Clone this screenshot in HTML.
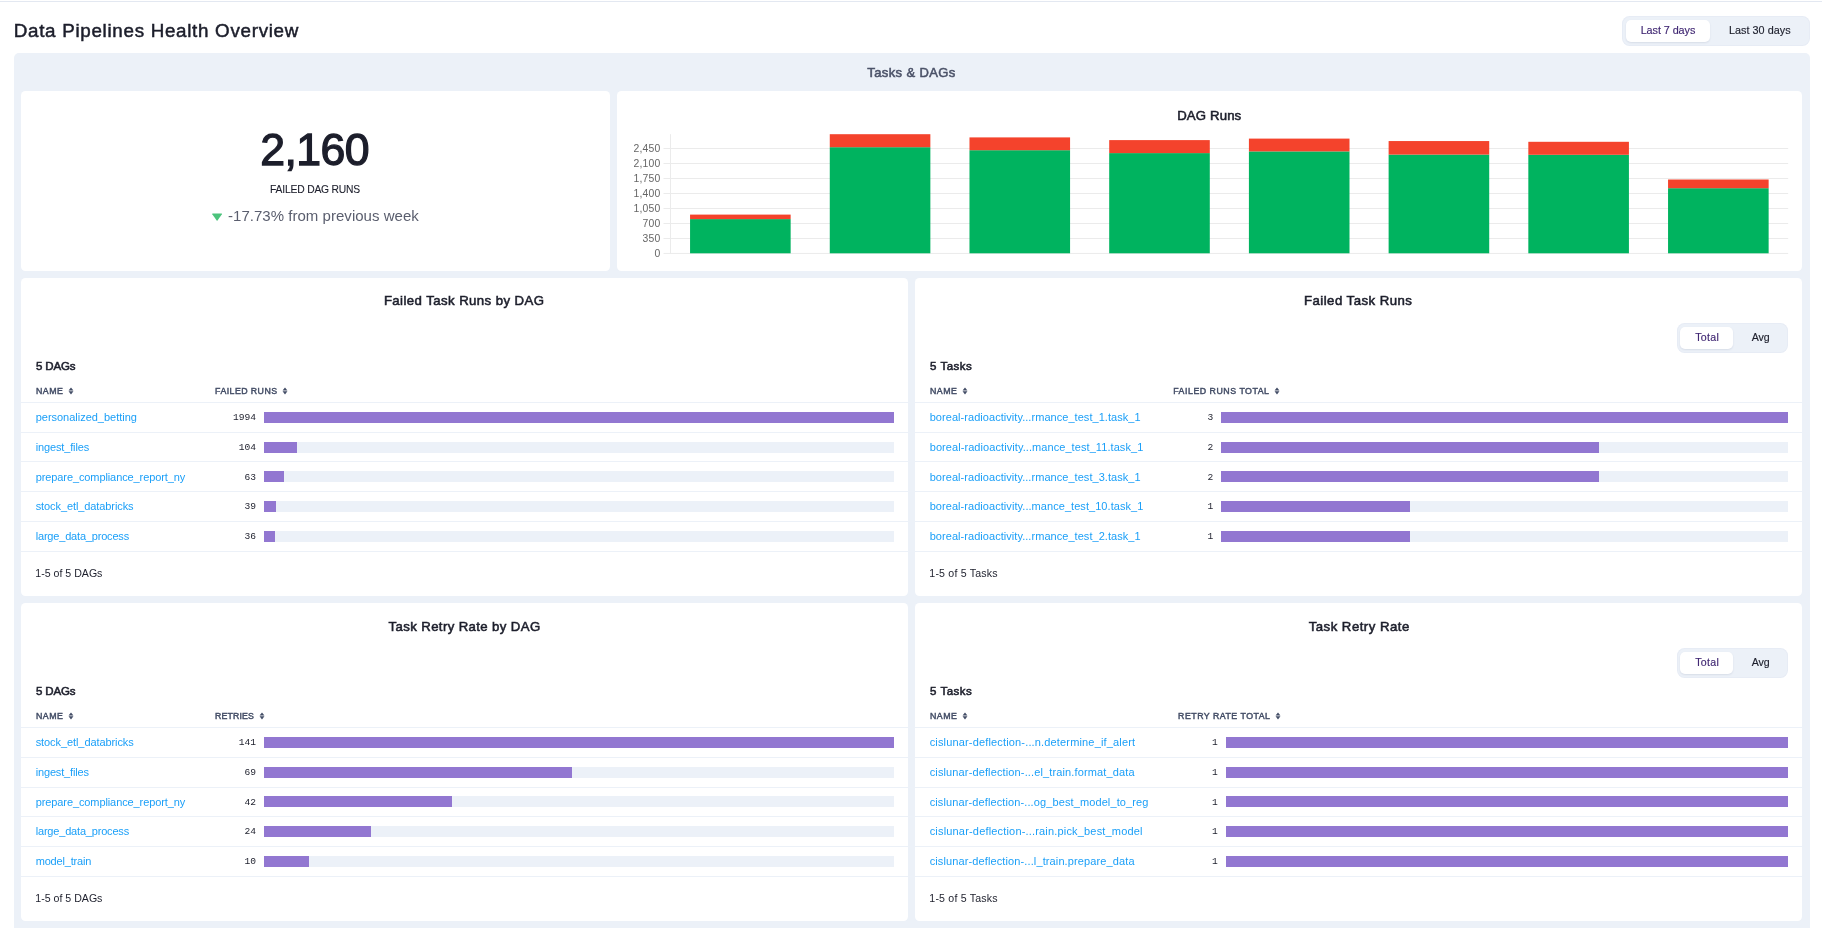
<!DOCTYPE html>
<html><head><meta charset="utf-8"><title>Data Pipelines Health Overview</title>
<style>
html,body{margin:0;padding:0;background:#fff;}
html{width:1822px;height:928px;overflow:hidden;}
body{width:1822px;height:928px;overflow:hidden;position:relative;will-change:transform;font-family:'Liberation Sans', sans-serif;}
.r{position:absolute;display:block;}
.t{position:absolute;white-space:nowrap;}
</style></head><body>
<div class="r" style="left:0px;top:1px;width:1822px;height:1px;background:#e3e8f1;"></div>
<div class="r" style="left:1622px;top:16px;width:188px;height:30px;background:#ecf1f8;border-radius:7.5px;box-shadow:inset 0 0 0 1px rgba(30,50,110,.025);"></div>
<div class="r" style="left:1626px;top:20px;width:84px;height:22px;background:#fff;border-radius:5px;box-shadow:0 1px 2px rgba(40,50,90,.10);"></div>
<div class="r" style="left:14px;top:53px;width:1796px;height:875px;background:#ecf1f8;border-radius:5px 5px 0 0;"></div>
<div class="r" style="left:21px;top:91px;width:589px;height:180px;background:#fff;border-radius:4.5px;"></div>
<div class="r" style="left:617px;top:91px;width:1185px;height:180px;background:#fff;border-radius:4.5px;"></div>
<div class="r" style="left:21px;top:278px;width:887px;height:318px;background:#fff;border-radius:4.5px;"></div>
<div class="r" style="left:915px;top:278px;width:887px;height:318px;background:#fff;border-radius:4.5px;"></div>
<div class="r" style="left:21px;top:603px;width:887px;height:318px;background:#fff;border-radius:4.5px;"></div>
<div class="r" style="left:915px;top:603px;width:887px;height:318px;background:#fff;border-radius:4.5px;"></div>
<svg class="r" style="left:211px;top:212px" width="12" height="10" viewBox="0 0 12 10"><path d="M1.6 1.6 L10.6 1.6 Q11.3 1.6 10.9 2.2 L6.5 8.6 Q6.1 9.1 5.7 8.6 L1.3 2.2 Q0.9 1.6 1.6 1.6 Z" fill="#4cc37c"/></svg>
<svg class="r" style="left:0;top:0" width="1822" height="300" viewBox="0 0 1822 300"><line x1="663.5" x2="1788.2" y1="253.45" y2="253.45" stroke="#ebebeb" stroke-width="1"/><line x1="663.5" x2="1788.2" y1="238.46" y2="238.46" stroke="#ebebeb" stroke-width="1"/><line x1="663.5" x2="1788.2" y1="223.47" y2="223.47" stroke="#ebebeb" stroke-width="1"/><line x1="663.5" x2="1788.2" y1="208.48" y2="208.48" stroke="#ebebeb" stroke-width="1"/><line x1="663.5" x2="1788.2" y1="193.49" y2="193.49" stroke="#ebebeb" stroke-width="1"/><line x1="663.5" x2="1788.2" y1="178.50" y2="178.50" stroke="#ebebeb" stroke-width="1"/><line x1="663.5" x2="1788.2" y1="163.51" y2="163.51" stroke="#ebebeb" stroke-width="1"/><line x1="663.5" x2="1788.2" y1="148.52" y2="148.52" stroke="#ebebeb" stroke-width="1"/><line x1="670.5" x2="670.5" y1="134.2" y2="253.5" stroke="#ebebeb" stroke-width="1"/><rect x="690.06" y="219.10" width="100.59" height="34.20" fill="#00b35f"/><rect x="690.06" y="214.60" width="100.59" height="4.50" fill="#f4432c"/><rect x="829.77" y="147.20" width="100.59" height="106.10" fill="#00b35f"/><rect x="829.77" y="134.20" width="100.59" height="13.00" fill="#f4432c"/><rect x="969.48" y="150.20" width="100.59" height="103.10" fill="#00b35f"/><rect x="969.48" y="137.40" width="100.59" height="12.80" fill="#f4432c"/><rect x="1109.20" y="153.10" width="100.59" height="100.20" fill="#00b35f"/><rect x="1109.20" y="140.10" width="100.59" height="13.00" fill="#f4432c"/><rect x="1248.91" y="151.40" width="100.59" height="101.90" fill="#00b35f"/><rect x="1248.91" y="138.60" width="100.59" height="12.80" fill="#f4432c"/><rect x="1388.62" y="154.60" width="100.59" height="98.70" fill="#00b35f"/><rect x="1388.62" y="141.05" width="100.59" height="13.55" fill="#f4432c"/><rect x="1528.33" y="154.80" width="100.59" height="98.50" fill="#00b35f"/><rect x="1528.33" y="141.80" width="100.59" height="13.00" fill="#f4432c"/><rect x="1668.05" y="188.20" width="100.59" height="65.10" fill="#00b35f"/><rect x="1668.05" y="179.50" width="100.59" height="8.70" fill="#f4432c"/></svg>
<div class="r" style="left:21px;top:402px;width:887px;height:1px;background:#ecf1f8;"></div>
<div class="r" style="left:21px;top:432px;width:887px;height:1px;background:#ecf1f8;"></div>
<div class="r" style="left:21px;top:461px;width:887px;height:1px;background:#ecf1f8;"></div>
<div class="r" style="left:21px;top:491px;width:887px;height:1px;background:#ecf1f8;"></div>
<div class="r" style="left:21px;top:521px;width:887px;height:1px;background:#ecf1f8;"></div>
<div class="r" style="left:21px;top:551px;width:887px;height:1px;background:#ecf1f8;"></div>
<div class="r" style="left:264px;top:412px;width:630px;height:11px;background:#ecf1f8;"></div>
<div class="r" style="left:264px;top:412px;width:630.00px;height:11px;background:#9277d1;"></div>
<div class="r" style="left:264px;top:442px;width:630px;height:11px;background:#ecf1f8;"></div>
<div class="r" style="left:264px;top:442px;width:32.86px;height:11px;background:#9277d1;"></div>
<div class="r" style="left:264px;top:471px;width:630px;height:11px;background:#ecf1f8;"></div>
<div class="r" style="left:264px;top:471px;width:19.90px;height:11px;background:#9277d1;"></div>
<div class="r" style="left:264px;top:501px;width:630px;height:11px;background:#ecf1f8;"></div>
<div class="r" style="left:264px;top:501px;width:12.32px;height:11px;background:#9277d1;"></div>
<div class="r" style="left:264px;top:531px;width:630px;height:11px;background:#ecf1f8;"></div>
<div class="r" style="left:264px;top:531px;width:11.37px;height:11px;background:#9277d1;"></div>
<svg class="r" style="left:67.60px;top:387.00px" width="6" height="8" viewBox="0 0 6 8"><path d="M3 0.4 L5.45 3.5 L0.55 3.5 Z M3 7.4 L5.45 4.3 L0.55 4.3 Z" fill="#434d66"/></svg>
<svg class="r" style="left:281.70px;top:387.00px" width="6" height="8" viewBox="0 0 6 8"><path d="M3 0.4 L5.45 3.5 L0.55 3.5 Z M3 7.4 L5.45 4.3 L0.55 4.3 Z" fill="#434d66"/></svg>
<div class="r" style="left:915px;top:402px;width:887px;height:1px;background:#ecf1f8;"></div>
<div class="r" style="left:915px;top:432px;width:887px;height:1px;background:#ecf1f8;"></div>
<div class="r" style="left:915px;top:461px;width:887px;height:1px;background:#ecf1f8;"></div>
<div class="r" style="left:915px;top:491px;width:887px;height:1px;background:#ecf1f8;"></div>
<div class="r" style="left:915px;top:521px;width:887px;height:1px;background:#ecf1f8;"></div>
<div class="r" style="left:915px;top:551px;width:887px;height:1px;background:#ecf1f8;"></div>
<div class="r" style="left:1221px;top:412px;width:567px;height:11px;background:#ecf1f8;"></div>
<div class="r" style="left:1221px;top:412px;width:567.00px;height:11px;background:#9277d1;"></div>
<div class="r" style="left:1221px;top:442px;width:567px;height:11px;background:#ecf1f8;"></div>
<div class="r" style="left:1221px;top:442px;width:378.00px;height:11px;background:#9277d1;"></div>
<div class="r" style="left:1221px;top:471px;width:567px;height:11px;background:#ecf1f8;"></div>
<div class="r" style="left:1221px;top:471px;width:378.00px;height:11px;background:#9277d1;"></div>
<div class="r" style="left:1221px;top:501px;width:567px;height:11px;background:#ecf1f8;"></div>
<div class="r" style="left:1221px;top:501px;width:189.00px;height:11px;background:#9277d1;"></div>
<div class="r" style="left:1221px;top:531px;width:567px;height:11px;background:#ecf1f8;"></div>
<div class="r" style="left:1221px;top:531px;width:189.00px;height:11px;background:#9277d1;"></div>
<svg class="r" style="left:961.60px;top:387.00px" width="6" height="8" viewBox="0 0 6 8"><path d="M3 0.4 L5.45 3.5 L0.55 3.5 Z M3 7.4 L5.45 4.3 L0.55 4.3 Z" fill="#434d66"/></svg>
<svg class="r" style="left:1273.80px;top:387.00px" width="6" height="8" viewBox="0 0 6 8"><path d="M3 0.4 L5.45 3.5 L0.55 3.5 Z M3 7.4 L5.45 4.3 L0.55 4.3 Z" fill="#434d66"/></svg>
<div class="r" style="left:21px;top:727px;width:887px;height:1px;background:#ecf1f8;"></div>
<div class="r" style="left:21px;top:757px;width:887px;height:1px;background:#ecf1f8;"></div>
<div class="r" style="left:21px;top:787px;width:887px;height:1px;background:#ecf1f8;"></div>
<div class="r" style="left:21px;top:816px;width:887px;height:1px;background:#ecf1f8;"></div>
<div class="r" style="left:21px;top:846px;width:887px;height:1px;background:#ecf1f8;"></div>
<div class="r" style="left:21px;top:876px;width:887px;height:1px;background:#ecf1f8;"></div>
<div class="r" style="left:264px;top:737px;width:630px;height:11px;background:#ecf1f8;"></div>
<div class="r" style="left:264px;top:737px;width:630.00px;height:11px;background:#9277d1;"></div>
<div class="r" style="left:264px;top:767px;width:630px;height:11px;background:#ecf1f8;"></div>
<div class="r" style="left:264px;top:767px;width:308.30px;height:11px;background:#9277d1;"></div>
<div class="r" style="left:264px;top:796px;width:630px;height:11px;background:#ecf1f8;"></div>
<div class="r" style="left:264px;top:796px;width:187.66px;height:11px;background:#9277d1;"></div>
<div class="r" style="left:264px;top:826px;width:630px;height:11px;background:#ecf1f8;"></div>
<div class="r" style="left:264px;top:826px;width:107.23px;height:11px;background:#9277d1;"></div>
<div class="r" style="left:264px;top:856px;width:630px;height:11px;background:#ecf1f8;"></div>
<div class="r" style="left:264px;top:856px;width:44.68px;height:11px;background:#9277d1;"></div>
<svg class="r" style="left:67.60px;top:712.00px" width="6" height="8" viewBox="0 0 6 8"><path d="M3 0.4 L5.45 3.5 L0.55 3.5 Z M3 7.4 L5.45 4.3 L0.55 4.3 Z" fill="#434d66"/></svg>
<svg class="r" style="left:258.60px;top:712.00px" width="6" height="8" viewBox="0 0 6 8"><path d="M3 0.4 L5.45 3.5 L0.55 3.5 Z M3 7.4 L5.45 4.3 L0.55 4.3 Z" fill="#434d66"/></svg>
<div class="r" style="left:915px;top:727px;width:887px;height:1px;background:#ecf1f8;"></div>
<div class="r" style="left:915px;top:757px;width:887px;height:1px;background:#ecf1f8;"></div>
<div class="r" style="left:915px;top:787px;width:887px;height:1px;background:#ecf1f8;"></div>
<div class="r" style="left:915px;top:816px;width:887px;height:1px;background:#ecf1f8;"></div>
<div class="r" style="left:915px;top:846px;width:887px;height:1px;background:#ecf1f8;"></div>
<div class="r" style="left:915px;top:876px;width:887px;height:1px;background:#ecf1f8;"></div>
<div class="r" style="left:1226px;top:737px;width:562px;height:11px;background:#ecf1f8;"></div>
<div class="r" style="left:1226px;top:737px;width:562.00px;height:11px;background:#9277d1;"></div>
<div class="r" style="left:1226px;top:767px;width:562px;height:11px;background:#ecf1f8;"></div>
<div class="r" style="left:1226px;top:767px;width:562.00px;height:11px;background:#9277d1;"></div>
<div class="r" style="left:1226px;top:796px;width:562px;height:11px;background:#ecf1f8;"></div>
<div class="r" style="left:1226px;top:796px;width:562.00px;height:11px;background:#9277d1;"></div>
<div class="r" style="left:1226px;top:826px;width:562px;height:11px;background:#ecf1f8;"></div>
<div class="r" style="left:1226px;top:826px;width:562.00px;height:11px;background:#9277d1;"></div>
<div class="r" style="left:1226px;top:856px;width:562px;height:11px;background:#ecf1f8;"></div>
<div class="r" style="left:1226px;top:856px;width:562.00px;height:11px;background:#9277d1;"></div>
<svg class="r" style="left:961.60px;top:712.00px" width="6" height="8" viewBox="0 0 6 8"><path d="M3 0.4 L5.45 3.5 L0.55 3.5 Z M3 7.4 L5.45 4.3 L0.55 4.3 Z" fill="#434d66"/></svg>
<svg class="r" style="left:1274.60px;top:712.00px" width="6" height="8" viewBox="0 0 6 8"><path d="M3 0.4 L5.45 3.5 L0.55 3.5 Z M3 7.4 L5.45 4.3 L0.55 4.3 Z" fill="#434d66"/></svg>
<div class="r" style="left:1677px;top:323px;width:111px;height:30px;background:#ecf1f8;border-radius:7.5px;box-shadow:inset 0 0 0 1px rgba(30,50,110,.025);"></div>
<div class="r" style="left:1680px;top:327px;width:53px;height:22px;background:#fff;border-radius:5px;box-shadow:0 1px 2px rgba(40,50,90,.10);"></div>
<div class="r" style="left:1677px;top:648px;width:111px;height:30px;background:#ecf1f8;border-radius:7.5px;box-shadow:inset 0 0 0 1px rgba(30,50,110,.025);"></div>
<div class="r" style="left:1680px;top:652px;width:53px;height:22px;background:#fff;border-radius:5px;box-shadow:0 1px 2px rgba(40,50,90,.10);"></div>
<div class="t" style="left:13.75px;top:19.00px;font:400 18.8px/24px 'Liberation Sans', sans-serif;color:#1c1e2b;letter-spacing:0.706px;-webkit-text-stroke:0.5px #1c1e2b;">Data Pipelines Health Overview</div>
<div class="t" style="left:1640.67px;top:23.01px;font:400 10.8px/14px 'Liberation Sans', sans-serif;color:#3f2672;letter-spacing:-0.057px;-webkit-text-stroke:0.15px #3f2672;">Last 7 days</div>
<div class="t" style="left:1728.88px;top:23.01px;font:400 10.8px/14px 'Liberation Sans', sans-serif;color:#1c1e2b;letter-spacing:0.048px;-webkit-text-stroke:0.15px #1c1e2b;">Last 30 days</div>
<div class="t" style="left:867.27px;top:64.00px;font:400 13px/17px 'Liberation Sans', sans-serif;color:#4b5268;letter-spacing:0.387px;-webkit-text-stroke:0.55px #4b5268;">Tasks &amp; DAGs</div>
<div class="t" style="left:260.25px;top:121.00px;font:400 44.6px/58px 'Liberation Sans', sans-serif;color:#1c1e2b;letter-spacing:-0.548px;-webkit-text-stroke:1.3px #1c1e2b;">2,160</div>
<div class="t" style="left:270.05px;top:183.01px;font:400 10.3px/13px 'Liberation Sans', sans-serif;color:#1c1e2b;letter-spacing:-0.180px;-webkit-text-stroke:0.1px #1c1e2b;">FAILED DAG RUNS</div>
<div class="t" style="left:228.00px;top:206.01px;font:400 15px/20px 'Liberation Sans', sans-serif;color:#5a5e6e;letter-spacing:0.029px;">-17.73% from previous week</div>
<div class="t" style="left:1177.18px;top:107.00px;font:400 13.2px/17px 'Liberation Sans', sans-serif;color:#1c1e2b;letter-spacing:0.145px;-webkit-text-stroke:0.55px #1c1e2b;">DAG Runs</div>
<div class="t" style="left:383.88px;top:292.00px;font:400 13.2px/17px 'Liberation Sans', sans-serif;color:#1c1e2b;letter-spacing:0.429px;-webkit-text-stroke:0.55px #1c1e2b;">Failed Task Runs by DAG</div>
<div class="t" style="left:36.07px;top:359.00px;font:400 11.5px/15px 'Liberation Sans', sans-serif;color:#1c1e2b;letter-spacing:-0.172px;-webkit-text-stroke:0.55px #1c1e2b;">5 DAGs</div>
<div class="t" style="left:36.02px;top:386.01px;font:400 8.8px/11px 'Liberation Sans', sans-serif;color:#434d66;letter-spacing:0.501px;-webkit-text-stroke:0.45px #434d66;">NAME</div>
<div class="t" style="left:215.12px;top:386.01px;font:400 8.8px/11px 'Liberation Sans', sans-serif;color:#434d66;letter-spacing:0.424px;-webkit-text-stroke:0.45px #434d66;">FAILED RUNS</div>
<div class="t" style="left:35.70px;top:410.00px;font:400 11px/14px 'Liberation Sans', sans-serif;color:#1a9ff8;letter-spacing:-0.016px;">personalized_betting</div>
<div class="t" style="left:233.03px;top:412.00px;font:400 9.6px/12px 'Liberation Mono', monospace;color:#1c1e2b;">1994</div>
<div class="t" style="left:35.70px;top:440.00px;font:400 11px/14px 'Liberation Sans', sans-serif;color:#1a9ff8;letter-spacing:-0.139px;">ingest_files</div>
<div class="t" style="left:238.79px;top:442.00px;font:400 9.6px/12px 'Liberation Mono', monospace;color:#1c1e2b;">104</div>
<div class="t" style="left:35.70px;top:470.00px;font:400 11px/14px 'Liberation Sans', sans-serif;color:#1a9ff8;letter-spacing:-0.099px;">prepare_compliance_report_ny</div>
<div class="t" style="left:244.54px;top:472.00px;font:400 9.6px/12px 'Liberation Mono', monospace;color:#1c1e2b;">63</div>
<div class="t" style="left:35.70px;top:499.00px;font:400 11px/14px 'Liberation Sans', sans-serif;color:#1a9ff8;letter-spacing:-0.093px;">stock_etl_databricks</div>
<div class="t" style="left:244.54px;top:501.00px;font:400 9.6px/12px 'Liberation Mono', monospace;color:#1c1e2b;">39</div>
<div class="t" style="left:35.70px;top:529.00px;font:400 11px/14px 'Liberation Sans', sans-serif;color:#1a9ff8;letter-spacing:-0.184px;">large_data_process</div>
<div class="t" style="left:244.54px;top:531.00px;font:400 9.6px/12px 'Liberation Mono', monospace;color:#1c1e2b;">36</div>
<div class="t" style="left:35.30px;top:566.00px;font:400 10.6px/14px 'Liberation Sans', sans-serif;color:#1c1e2b;">1-5 of 5 DAGs</div>
<div class="t" style="left:1303.98px;top:292.00px;font:400 13.2px/17px 'Liberation Sans', sans-serif;color:#1c1e2b;letter-spacing:0.467px;-webkit-text-stroke:0.55px #1c1e2b;">Failed Task Runs</div>
<div class="t" style="left:930.07px;top:359.00px;font:400 11.5px/15px 'Liberation Sans', sans-serif;color:#1c1e2b;letter-spacing:0.486px;-webkit-text-stroke:0.55px #1c1e2b;">5 Tasks</div>
<div class="t" style="left:930.02px;top:386.01px;font:400 8.8px/11px 'Liberation Sans', sans-serif;color:#434d66;letter-spacing:0.501px;-webkit-text-stroke:0.45px #434d66;">NAME</div>
<div class="t" style="left:1173.22px;top:386.01px;font:400 8.8px/11px 'Liberation Sans', sans-serif;color:#434d66;letter-spacing:0.517px;-webkit-text-stroke:0.45px #434d66;">FAILED RUNS TOTAL</div>
<div class="t" style="left:929.70px;top:410.00px;font:400 11px/14px 'Liberation Sans', sans-serif;color:#1a9ff8;letter-spacing:0.048px;">boreal-radioactivity...rmance_test_1.task_1</div>
<div class="t" style="left:1207.60px;top:412.00px;font:400 9.6px/12px 'Liberation Mono', monospace;color:#1c1e2b;">3</div>
<div class="t" style="left:929.70px;top:440.00px;font:400 11px/14px 'Liberation Sans', sans-serif;color:#1a9ff8;letter-spacing:0.073px;">boreal-radioactivity...mance_test_11.task_1</div>
<div class="t" style="left:1207.60px;top:442.00px;font:400 9.6px/12px 'Liberation Mono', monospace;color:#1c1e2b;">2</div>
<div class="t" style="left:929.70px;top:470.00px;font:400 11px/14px 'Liberation Sans', sans-serif;color:#1a9ff8;letter-spacing:0.048px;">boreal-radioactivity...rmance_test_3.task_1</div>
<div class="t" style="left:1207.60px;top:472.00px;font:400 9.6px/12px 'Liberation Mono', monospace;color:#1c1e2b;">2</div>
<div class="t" style="left:929.70px;top:499.00px;font:400 11px/14px 'Liberation Sans', sans-serif;color:#1a9ff8;letter-spacing:0.054px;">boreal-radioactivity...mance_test_10.task_1</div>
<div class="t" style="left:1207.60px;top:501.00px;font:400 9.6px/12px 'Liberation Mono', monospace;color:#1c1e2b;">1</div>
<div class="t" style="left:929.70px;top:529.00px;font:400 11px/14px 'Liberation Sans', sans-serif;color:#1a9ff8;letter-spacing:0.048px;">boreal-radioactivity...rmance_test_2.task_1</div>
<div class="t" style="left:1207.60px;top:531.00px;font:400 9.6px/12px 'Liberation Mono', monospace;color:#1c1e2b;">1</div>
<div class="t" style="left:929.30px;top:566.00px;font:400 10.6px/14px 'Liberation Sans', sans-serif;color:#1c1e2b;letter-spacing:0.196px;">1-5 of 5 Tasks</div>
<div class="t" style="left:388.57px;top:618.00px;font:400 13.2px/17px 'Liberation Sans', sans-serif;color:#1c1e2b;letter-spacing:0.380px;-webkit-text-stroke:0.55px #1c1e2b;">Task Retry Rate by DAG</div>
<div class="t" style="left:36.07px;top:684.00px;font:400 11.5px/15px 'Liberation Sans', sans-serif;color:#1c1e2b;letter-spacing:-0.172px;-webkit-text-stroke:0.55px #1c1e2b;">5 DAGs</div>
<div class="t" style="left:36.02px;top:711.01px;font:400 8.8px/11px 'Liberation Sans', sans-serif;color:#434d66;letter-spacing:0.501px;-webkit-text-stroke:0.45px #434d66;">NAME</div>
<div class="t" style="left:215.12px;top:711.01px;font:400 8.8px/11px 'Liberation Sans', sans-serif;color:#434d66;letter-spacing:0.099px;-webkit-text-stroke:0.45px #434d66;">RETRIES</div>
<div class="t" style="left:35.70px;top:735.00px;font:400 11px/14px 'Liberation Sans', sans-serif;color:#1a9ff8;letter-spacing:-0.082px;">stock_etl_databricks</div>
<div class="t" style="left:238.79px;top:737.00px;font:400 9.6px/12px 'Liberation Mono', monospace;color:#1c1e2b;">141</div>
<div class="t" style="left:35.70px;top:765.00px;font:400 11px/14px 'Liberation Sans', sans-serif;color:#1a9ff8;letter-spacing:-0.157px;">ingest_files</div>
<div class="t" style="left:244.54px;top:767.00px;font:400 9.6px/12px 'Liberation Mono', monospace;color:#1c1e2b;">69</div>
<div class="t" style="left:35.70px;top:795.00px;font:400 11px/14px 'Liberation Sans', sans-serif;color:#1a9ff8;letter-spacing:-0.099px;">prepare_compliance_report_ny</div>
<div class="t" style="left:244.54px;top:797.00px;font:400 9.6px/12px 'Liberation Mono', monospace;color:#1c1e2b;">42</div>
<div class="t" style="left:35.70px;top:824.00px;font:400 11px/14px 'Liberation Sans', sans-serif;color:#1a9ff8;letter-spacing:-0.184px;">large_data_process</div>
<div class="t" style="left:244.54px;top:826.00px;font:400 9.6px/12px 'Liberation Mono', monospace;color:#1c1e2b;">24</div>
<div class="t" style="left:35.70px;top:854.00px;font:400 11px/14px 'Liberation Sans', sans-serif;color:#1a9ff8;letter-spacing:-0.176px;">model_train</div>
<div class="t" style="left:244.54px;top:856.00px;font:400 9.6px/12px 'Liberation Mono', monospace;color:#1c1e2b;">10</div>
<div class="t" style="left:35.30px;top:891.00px;font:400 10.6px/14px 'Liberation Sans', sans-serif;color:#1c1e2b;">1-5 of 5 DAGs</div>
<div class="t" style="left:1308.68px;top:618.00px;font:400 13.2px/17px 'Liberation Sans', sans-serif;color:#1c1e2b;letter-spacing:0.484px;-webkit-text-stroke:0.55px #1c1e2b;">Task Retry Rate</div>
<div class="t" style="left:930.07px;top:684.00px;font:400 11.5px/15px 'Liberation Sans', sans-serif;color:#1c1e2b;letter-spacing:0.486px;-webkit-text-stroke:0.55px #1c1e2b;">5 Tasks</div>
<div class="t" style="left:930.02px;top:711.01px;font:400 8.8px/11px 'Liberation Sans', sans-serif;color:#434d66;letter-spacing:0.501px;-webkit-text-stroke:0.45px #434d66;">NAME</div>
<div class="t" style="left:1178.12px;top:711.01px;font:400 8.8px/11px 'Liberation Sans', sans-serif;color:#434d66;letter-spacing:0.484px;-webkit-text-stroke:0.45px #434d66;">RETRY RATE TOTAL</div>
<div class="t" style="left:929.70px;top:735.00px;font:400 11px/14px 'Liberation Sans', sans-serif;color:#1a9ff8;letter-spacing:0.158px;">cislunar-deflection-...n.determine_if_alert</div>
<div class="t" style="left:1211.90px;top:737.00px;font:400 9.6px/12px 'Liberation Mono', monospace;color:#1c1e2b;">1</div>
<div class="t" style="left:929.70px;top:765.00px;font:400 11px/14px 'Liberation Sans', sans-serif;color:#1a9ff8;letter-spacing:0.131px;">cislunar-deflection-...el_train.format_data</div>
<div class="t" style="left:1211.90px;top:767.00px;font:400 9.6px/12px 'Liberation Mono', monospace;color:#1c1e2b;">1</div>
<div class="t" style="left:929.70px;top:795.00px;font:400 11px/14px 'Liberation Sans', sans-serif;color:#1a9ff8;letter-spacing:0.112px;">cislunar-deflection-...og_best_model_to_reg</div>
<div class="t" style="left:1211.90px;top:797.00px;font:400 9.6px/12px 'Liberation Mono', monospace;color:#1c1e2b;">1</div>
<div class="t" style="left:929.70px;top:824.00px;font:400 11px/14px 'Liberation Sans', sans-serif;color:#1a9ff8;letter-spacing:0.176px;">cislunar-deflection-...rain.pick_best_model</div>
<div class="t" style="left:1211.90px;top:826.00px;font:400 9.6px/12px 'Liberation Mono', monospace;color:#1c1e2b;">1</div>
<div class="t" style="left:929.70px;top:854.00px;font:400 11px/14px 'Liberation Sans', sans-serif;color:#1a9ff8;letter-spacing:0.116px;">cislunar-deflection-...l_train.prepare_data</div>
<div class="t" style="left:1211.90px;top:856.00px;font:400 9.6px/12px 'Liberation Mono', monospace;color:#1c1e2b;">1</div>
<div class="t" style="left:929.30px;top:891.00px;font:400 10.6px/14px 'Liberation Sans', sans-serif;color:#1c1e2b;letter-spacing:0.196px;">1-5 of 5 Tasks</div>
<div class="t" style="left:1695.28px;top:330.00px;font:400 10.6px/14px 'Liberation Sans', sans-serif;color:#3f2672;letter-spacing:0.282px;-webkit-text-stroke:0.15px #3f2672;">Total</div>
<div class="t" style="left:1751.67px;top:330.00px;font:400 10.6px/14px 'Liberation Sans', sans-serif;color:#1c1e2b;letter-spacing:-0.061px;-webkit-text-stroke:0.15px #1c1e2b;">Avg</div>
<div class="t" style="left:1695.28px;top:655.00px;font:400 10.6px/14px 'Liberation Sans', sans-serif;color:#3f2672;letter-spacing:0.282px;-webkit-text-stroke:0.15px #3f2672;">Total</div>
<div class="t" style="left:1751.67px;top:655.00px;font:400 10.6px/14px 'Liberation Sans', sans-serif;color:#1c1e2b;letter-spacing:-0.061px;-webkit-text-stroke:0.15px #1c1e2b;">Avg</div>
<div class="t" style="left:654.40px;top:247.01px;font:400 10.4px/14px 'Liberation Sans', sans-serif;color:#666;letter-spacing:0.150px;">0</div>
<div class="t" style="left:642.54px;top:232.01px;font:400 10.4px/14px 'Liberation Sans', sans-serif;color:#666;letter-spacing:0.150px;">350</div>
<div class="t" style="left:642.54px;top:217.01px;font:400 10.4px/14px 'Liberation Sans', sans-serif;color:#666;letter-spacing:0.150px;">700</div>
<div class="t" style="left:633.58px;top:202.01px;font:400 10.4px/14px 'Liberation Sans', sans-serif;color:#666;letter-spacing:0.150px;">1,050</div>
<div class="t" style="left:633.58px;top:187.01px;font:400 10.4px/14px 'Liberation Sans', sans-serif;color:#666;letter-spacing:0.150px;">1,400</div>
<div class="t" style="left:633.58px;top:172.01px;font:400 10.4px/14px 'Liberation Sans', sans-serif;color:#666;letter-spacing:0.150px;">1,750</div>
<div class="t" style="left:633.58px;top:157.01px;font:400 10.4px/14px 'Liberation Sans', sans-serif;color:#666;letter-spacing:0.150px;">2,100</div>
<div class="t" style="left:633.58px;top:142.01px;font:400 10.4px/14px 'Liberation Sans', sans-serif;color:#666;letter-spacing:0.150px;">2,450</div>
</body></html>
